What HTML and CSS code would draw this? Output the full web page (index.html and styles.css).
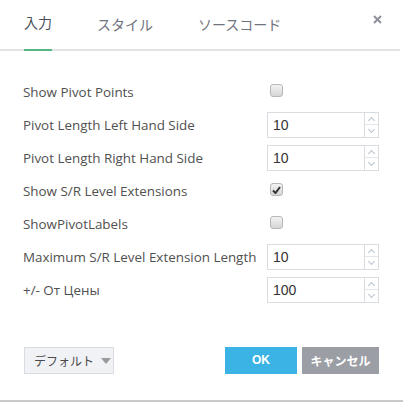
FILE: index.html
```html
<!DOCTYPE html>
<html>
<head>
<meta charset="utf-8">
<link rel="stylesheet" href="styles.css">
</head>
<body>
<div class="dialog">
  <div class="tabs">
    <div class="tab active">入力</div>
    <div class="tab">スタイル</div>
    <div class="tab">ソースコード</div>
    <div class="close">
      <svg width="9" height="9" viewBox="0 0 9 9"><path d="M1 1L8 8M8 1L1 8" stroke="#8e9199" stroke-width="2"/></svg>
    </div>
  </div>
  <div class="form">
    <div class="row"><span class="label">Show Pivot Points</span><span class="cb"></span></div>
    <div class="row"><span class="label">Pivot Length Left Hand Side</span><div class="num"><span class="val">10</span><span class="spin"><i class="up"></i><i class="down"></i></span></div></div>
    <div class="row"><span class="label">Pivot Length Right Hand Side</span><div class="num"><span class="val">10</span><span class="spin"><i class="up"></i><i class="down"></i></span></div></div>
    <div class="row"><span class="label">Show S/R Level Extensions</span><span class="cb checked"><svg width="9" height="8" viewBox="0 0 9 8"><path d="M1 4.5L3.5 7L8 1" stroke="#333" stroke-width="2" fill="none"/></svg></span></div>
    <div class="row"><span class="label">ShowPivotLabels</span><span class="cb"></span></div>
    <div class="row"><span class="label">Maximum S/R Level Extension Length</span><div class="num"><span class="val">10</span><span class="spin"><i class="up"></i><i class="down"></i></span></div></div>
    <div class="row"><span class="label">+/- От Цены</span><div class="num"><span class="val">100</span><span class="spin"><i class="up"></i><i class="down"></i></span></div></div>
  </div>
  <div class="footer">
    <div class="defaults">デフォルト<span class="caret"></span></div>
    <div class="actions">
      <div class="btn ok">OK</div>
      <div class="btn cancel">キャンセル</div>
    </div>
  </div>
</div>
<div class="bottomline"></div>
</body>
</html>
```
FILE: styles.css
```css
html, body {
  margin: 0;
  padding: 0;
  background: #fff;
}
body {
  width: 403px;
  height: 402px;
  overflow: hidden;
  font-family: "Open Sans", "Noto Sans CJK JP", sans-serif;
}
.dialog {
  width: 400px;
  height: 400px;
  display: flex;
  flex-direction: column;
}
.tabs {
  display: flex;
  align-items: flex-end;
  height: 49px;
  border-bottom: 2px solid #e0e3e6;
  padding-left: 24px;
  position: relative;
}
.tab {
  font-family: "Noto Sans CJK JP", sans-serif;
  font-size: 14px;
  color: #6f737d;
  height: 49px;
  line-height: 44px;
  margin-right: 45px;
  box-sizing: border-box;
  margin-bottom: -2px;
  white-space: nowrap;
}
.tab.active {
  color: #4b505b;
  border-bottom: 2px solid #56b582;
  height: 51px;
}
.close {
  position: absolute;
  right: 18px;
  top: 15px;
  width: 9px;
  height: 9px;
  line-height: 0;
}
.form {
  padding: 24px 21px 0 23px;
  display: flex;
  flex-direction: column;
}
.row {
  display: flex;
  align-items: center;
  height: 33px;
}
.label {
  flex: 0 0 244px;
  font-size: 13.4px;
  color: #505050;
  white-space: nowrap;
}
.cb {
  flex: 0 0 auto;
  width: 11px;
  height: 11px;
  margin-left: 3px;
  border: 1px solid #b8b8b8;
  border-radius: 3px;
  background: linear-gradient(#f2f2f2, #d6d6d6);
  display: flex;
  align-items: center;
  justify-content: center;
  margin-top: -2px;
}
.num {
  flex: 0 0 112px;
  height: 26px;
  box-sizing: border-box;
  border: 1px solid #d9dde2;
  display: flex;
}
.val {
  flex: 1;
  font-family: "Liberation Sans", Arial, sans-serif;
  font-size: 14px;
  color: #333;
  line-height: 24px;
  padding-left: 5px;
}
.spin {
  width: 13px;
  border-left: 1px solid #d9dde2;
  display: flex;
  flex-direction: column;
}
.spin i {
  flex: 1;
  position: relative;
}
.spin i.up {
  border-bottom: 1px solid #e3e6ea;
}
.spin i::after {
  content: "";
  position: absolute;
  left: 4px;
  width: 4px;
  height: 4px;
  border-left: 1px solid #b9c3cf;
  border-top: 1px solid #b9c3cf;
}
.spin i.up::after {
  top: 5px;
  transform: rotate(45deg);
}
.spin i.down::after {
  top: 2px;
  transform: rotate(-135deg);
}
.footer {
  display: flex;
  justify-content: space-between;
  align-items: center;
  padding: 0 21px 0 24px;
  margin-top: 41px;
}
.defaults {
  width: 90px;
  height: 27px;
  box-sizing: border-box;
  border: 1px solid #d9dbe0;
  background: #f1f2f6;
  font-family: "Noto Sans CJK JP", sans-serif;
  font-size: 12px;
  color: #4a4a4a;
  display: flex;
  align-items: center;
  padding-left: 9px;
  gap: 7px;
  white-space: nowrap;
}
.caret {
  width: 0;
  height: 0;
  border-left: 5px solid transparent;
  border-right: 5px solid transparent;
  border-top: 6px solid #9a9a9a;
}
.actions {
  display: flex;
  gap: 5px;
}
.btn {
  height: 27px;
  line-height: 27px;
  text-align: center;
  color: #fff;
  font-weight: bold;
  font-size: 12px;
  font-family: "Noto Sans CJK JP", sans-serif;
}
.btn.ok {
  width: 72px;
  background: #3bb3e4;
  font-family: "Liberation Sans", sans-serif;
}
.btn.cancel {
  width: 77px;
  background: #9b9ea4;
}
.bottomline {
  height: 2px;
  background: #c9c9c9;
}
```
